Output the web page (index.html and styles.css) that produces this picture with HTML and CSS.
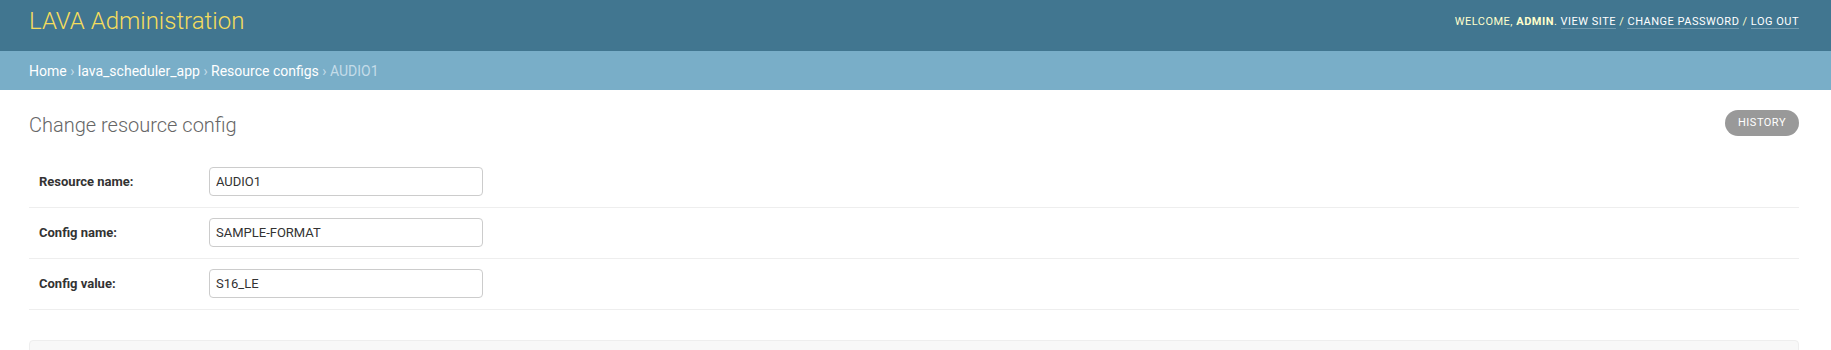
FILE: index.html
```html
<!DOCTYPE html>
<html lang="en">
<head>
<meta charset="utf-8">
<title>Change resource config | LAVA Administration</title>
<link rel="stylesheet" href="styles.css">
</head>
<body>
<div class="header">
  <h1 class="branding">LAVA Administration</h1>
  <div class="user-tools">Welcome, <strong>admin</strong>. <a href="#">View site</a> / <a href="#">Change password</a> / <a href="#">Log out</a></div>
</div>
<div class="breadcrumbs"><a href="#">Home</a> › <a href="#">lava_scheduler_app</a> › <a href="#">Resource configs</a> › AUDIO1</div>
<div class="content">
  <div class="title-row">
    <h1 class="title">Change resource config</h1>
    <a class="history" href="#">History</a>
  </div>
  <div class="fieldset">
    <div class="form-row">
      <label class="label">Resource name:</label>
      <input class="field" type="text" value="AUDIO1">
    </div>
    <div class="form-row">
      <label class="label">Config name:</label>
      <input class="field" type="text" value="SAMPLE-FORMAT">
    </div>
    <div class="form-row">
      <label class="label">Config value:</label>
      <input class="field" type="text" value="S16_LE">
    </div>
  </div>
  <div class="submit-row"></div>
</div>
</body>
</html>
```
FILE: styles.css
```css
html, body {
  margin: 0;
  padding: 0;
  background: #fff;
  font-family: Roboto, "Liberation Sans", sans-serif;
  color: #333;
}
.header {
  height: 51px;
  box-sizing: border-box;
  background: #417690;
  padding: 0 32px 0 29px;
  display: flex;
  justify-content: space-between;
  align-items: flex-start;
}
.branding {
  margin: 7px 0 0 0;
  font-size: 24px;
  line-height: 28px;
  font-weight: 300;
  color: #f5dd5d;
}
.user-tools {
  margin-top: 15px;
  font-size: 11px;
  line-height: 13px;
  letter-spacing: 0.5px;
  text-transform: uppercase;
  color: #ffc;
}
.user-tools strong {
  font-weight: 700;
}
.user-tools a {
  color: #fff;
  text-decoration: none;
  border-bottom: 1px solid rgba(255, 255, 255, 0.25);
}
.breadcrumbs {
  height: 39px;
  box-sizing: border-box;
  background: #79aec8;
  padding: 12px 32px 0 29px;
  font-size: 14px;
  line-height: 16px;
  color: #c4dce8;
}
.breadcrumbs a {
  color: #fff;
  text-decoration: none;
}
.content {
  padding: 20px 32px 0 29px;
}
.title-row {
  display: flex;
  justify-content: space-between;
  align-items: flex-start;
  margin-bottom: 20px;
}
.title {
  margin: 3px 0 0 0;
  font-size: 20px;
  line-height: 24px;
  font-weight: 300;
  color: #666;
}
.history {
  display: block;
  height: 26px;
  box-sizing: border-box;
  padding: 0 13px;
  line-height: 26px;
  background: #999;
  color: #fff;
  border-radius: 15px;
  font-size: 11px;
  font-weight: 400;
  letter-spacing: 0.5px;
  text-transform: uppercase;
  text-decoration: none;
}
.fieldset {
  margin-bottom: 30px;
}
.form-row {
  display: flex;
  align-items: baseline;
  padding: 10px 10px 11px 10px;
  border-bottom: 1px solid #eee;
  font-size: 13px;
}
.label {
  width: 170px;
  flex: none;
  font-weight: 700;
  color: #333;
}
.field {
  width: 274px;
  height: 29px;
  box-sizing: border-box;
  margin: 0;
  padding: 5px 6px;
  border: 1px solid #ccc;
  border-radius: 4px;
  font-family: Roboto, "Liberation Sans", sans-serif;
  font-size: 13px;
  color: #333;
  background: #fff;
}
.submit-row {
  height: 60px;
  background: #f8f8f8;
  border: 1px solid #eee;
  border-radius: 4px;
}
```
